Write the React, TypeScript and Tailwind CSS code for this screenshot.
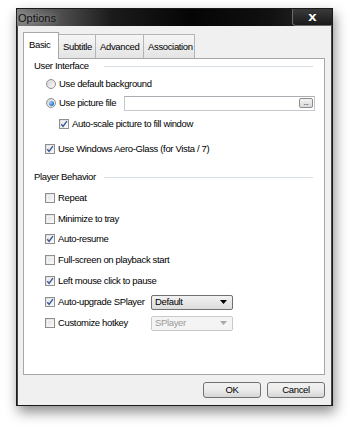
import React from 'react';

const font = { fontFamily: '"Liberation Sans", Arial, sans-serif' };

function Check({ on = false }: { on?: boolean }) {
  return (
    <span className="relative flex h-[10px] w-[10px] shrink-0 items-center justify-center border border-[#8e8f8f] bg-gradient-to-br from-[#dcdcdc] to-[#fbfbfb]">
      <span className="absolute inset-[1px] border border-[#f4f4f4]" />
      {on && (
        <svg viewBox="0 0 8 8" className="relative h-[8px] w-[8px]">
          <path d="M1.2 4.2 L3.1 6.3 L6.9 1.2" fill="none" stroke="#3b5a9a" strokeWidth="1.4" />
        </svg>
      )}
    </span>
  );
}

function Radio({ on = false }: { on?: boolean }) {
  return (
    <span className="flex h-[10px] w-[10px] shrink-0 items-center justify-center rounded-full border border-[#8e8f8f] bg-gradient-to-br from-[#d6d6d6] to-[#fafafa]">
      {on && <span className="h-[5px] w-[5px] rounded-full bg-[radial-gradient(circle_at_35%_35%,#9fd3ff,#1d6cc4_70%)]" />}
    </span>
  );
}

function Row({ children, className = '' }: { children: React.ReactNode; className?: string }) {
  return <div className={`flex h-[16px] items-center ${className}`}>{children}</div>;
}

function CheckRow({ label, on, className = '' }: { label: string; on?: boolean; className?: string }) {
  return (
    <Row className={`pl-[21px] ${className}`}>
      <Check on={on} />
      <span className="ml-[3px] whitespace-nowrap">{label}</span>
    </Row>
  );
}

function GroupLabel({ label, className = '' }: { label: string; className?: string }) {
  return (
    <div className={`flex h-[12px] items-center pl-[10px] pr-[11px] ${className}`}>
      <span className="w-[70px] whitespace-nowrap">{label}</span>
      <span className="h-px flex-1 border-t border-[#d5dfe5]" />
    </div>
  );
}

function Select({ value, disabled = false }: { value: string; disabled?: boolean }) {
  return (
    <div
      className={`flex h-[15px] w-[82px] items-center justify-between rounded-[2px] border px-[3px] ${
        disabled
          ? 'border-[#c9c9c9] bg-[#f4f4f4] text-[#9a9a9a]'
          : 'border-[#707070] bg-gradient-to-b from-[#f2f2f2] to-[#dcdcdc] text-black'
      }`}
    >
      <span>{value}</span>
      <svg viewBox="0 0 7 4" className="mr-[2px] h-[4px] w-[7px]">
        <path d="M0 0 H7 L3.5 4 Z" fill={disabled ? '#a8a8a8' : '#000'} />
      </svg>
    </div>
  );
}

function Tab({ label, active = false, w }: { label: string; active?: boolean; w: string }) {
  return active ? (
    <div className={`relative z-10 -mb-px flex h-[27px] ${w} items-start border border-b-0 border-[#a7a7a7] bg-white pl-[5px] pt-[5px]`}>
      {label}
    </div>
  ) : (
    <div className={`mt-[2px] flex h-[24px] ${w} items-start border border-b-0 border-l-0 border-[#b5b5b5] bg-gradient-to-b from-[#f6f6f6] to-[#e4e4e4] pl-[4px] pt-[5px]`}>
      {label}
    </div>
  );
}

function Button({ label }: { label: string }) {
  return (
    <div className="flex h-[16px] w-[58px] items-center justify-center rounded-[3px] border border-[#707070] bg-gradient-to-b from-[#f2f2f2] via-[#ebebeb] to-[#d6d6d6]">
      {label}
    </div>
  );
}

export default function App() {
  return (
    <div className="h-[431px] w-[350px] overflow-hidden bg-white pl-[16px] pt-[8px] text-[9.5px] tracking-[-0.35px] text-black" style={font}>
      <div className="flex h-[398px] w-[317px] flex-col border border-[#1a1a1a] shadow-[2px_6px_12px_rgba(0,0,0,0.45)]">
        {/* title bar */}
        <div className="flex h-[17px] items-stretch bg-[linear-gradient(90deg,#7d7d7d_0%,#5a5a5a_10%,#1b1b1b_30%,#050505_55%,#101010_80%,#2e2e2e_100%)]">
          <span className="pl-[1px] pt-[3px] text-[11px] leading-[12px] tracking-normal text-[#111] [text-shadow:0_0_6px_#bdbdbd]">Options</span>
          <div className="ml-auto flex w-[40px] items-center justify-center rounded-bl-[4px] border-b border-l border-[#6a6a6a] bg-gradient-to-b from-[#3a3a3a] to-[#1a1a1a] text-[12px] font-bold text-white">
            <span className="scale-x-125">x</span>
          </div>
        </div>

        {/* client */}
        <div className="flex flex-1 flex-col border-x border-[#474747] bg-[#f0f0f0] px-[5px] pb-[7px] pt-[6px]">
          <div className="flex h-[26px] items-end">
            <Tab label="Basic" active w="w-[36px]" />
            <Tab label="Subtitle" w="w-[37px]" />
            <Tab label="Advanced" w="w-[48px]" />
            <Tab label="Association" w="w-[51px]" />
          </div>

          <div className="flex h-[317px] w-[302px] flex-col border border-[#a7a7a7] bg-white">
            <GroupLabel label="User Interface" className="mt-[1px]" />
            <Row className="mt-[4px] pl-[22px]">
              <Radio />
              <span className="ml-[3px] whitespace-nowrap">Use default background</span>
            </Row>
            <Row className="mt-[3px] pl-[22px]">
              <Radio on />
              <span className="ml-[3px] w-[65px] whitespace-nowrap">Use picture file</span>
              <div className="flex h-[15px] w-[191px] items-center justify-end border border-[#c5c8cd] border-t-[#abadb3] bg-white pr-[1px]">
                <div className="flex h-[10px] w-[14px] items-center justify-center rounded-[2px] border border-[#8c8c8c] bg-gradient-to-b from-[#f3f3f3] to-[#d9d9d9] text-[7px] leading-[6px]">
                  ...
                </div>
              </div>
            </Row>
            <CheckRow label="Auto-scale picture to fill window" on className="mt-[5px] pl-[35px]" />
            <CheckRow label="Use Windows Aero-Glass (for Vista / 7)" on className="mt-[9px]" />

            <GroupLabel label="Player Behavior" className="mt-[14px]" />
            <CheckRow label="Repeat" className="mt-[7px]" />
            <CheckRow label="Minimize to tray" className="mt-[5px]" />
            <CheckRow label="Auto-resume" on className="mt-[4px]" />
            <CheckRow label="Full-screen on playback start" className="mt-[5px]" />
            <CheckRow label="Left mouse click to pause" on className="mt-[5px]" />
            <Row className="mt-[5px] pl-[21px]">
              <Check on />
              <span className="ml-[3px] w-[93px] whitespace-nowrap">Auto-upgrade SPlayer</span>
              <Select value="Default" />
            </Row>
            <Row className="mt-[5px] pl-[21px]">
              <Check />
              <span className="ml-[3px] w-[93px] whitespace-nowrap">Customize hotkey</span>
              <Select value="SPlayer" disabled />
            </Row>
          </div>

          <div className="mt-[7px] flex justify-end gap-[6px] pr-[1px]">
            <Button label="OK" />
            <Button label="Cancel" />
          </div>
        </div>
      </div>
    </div>
  );
}
